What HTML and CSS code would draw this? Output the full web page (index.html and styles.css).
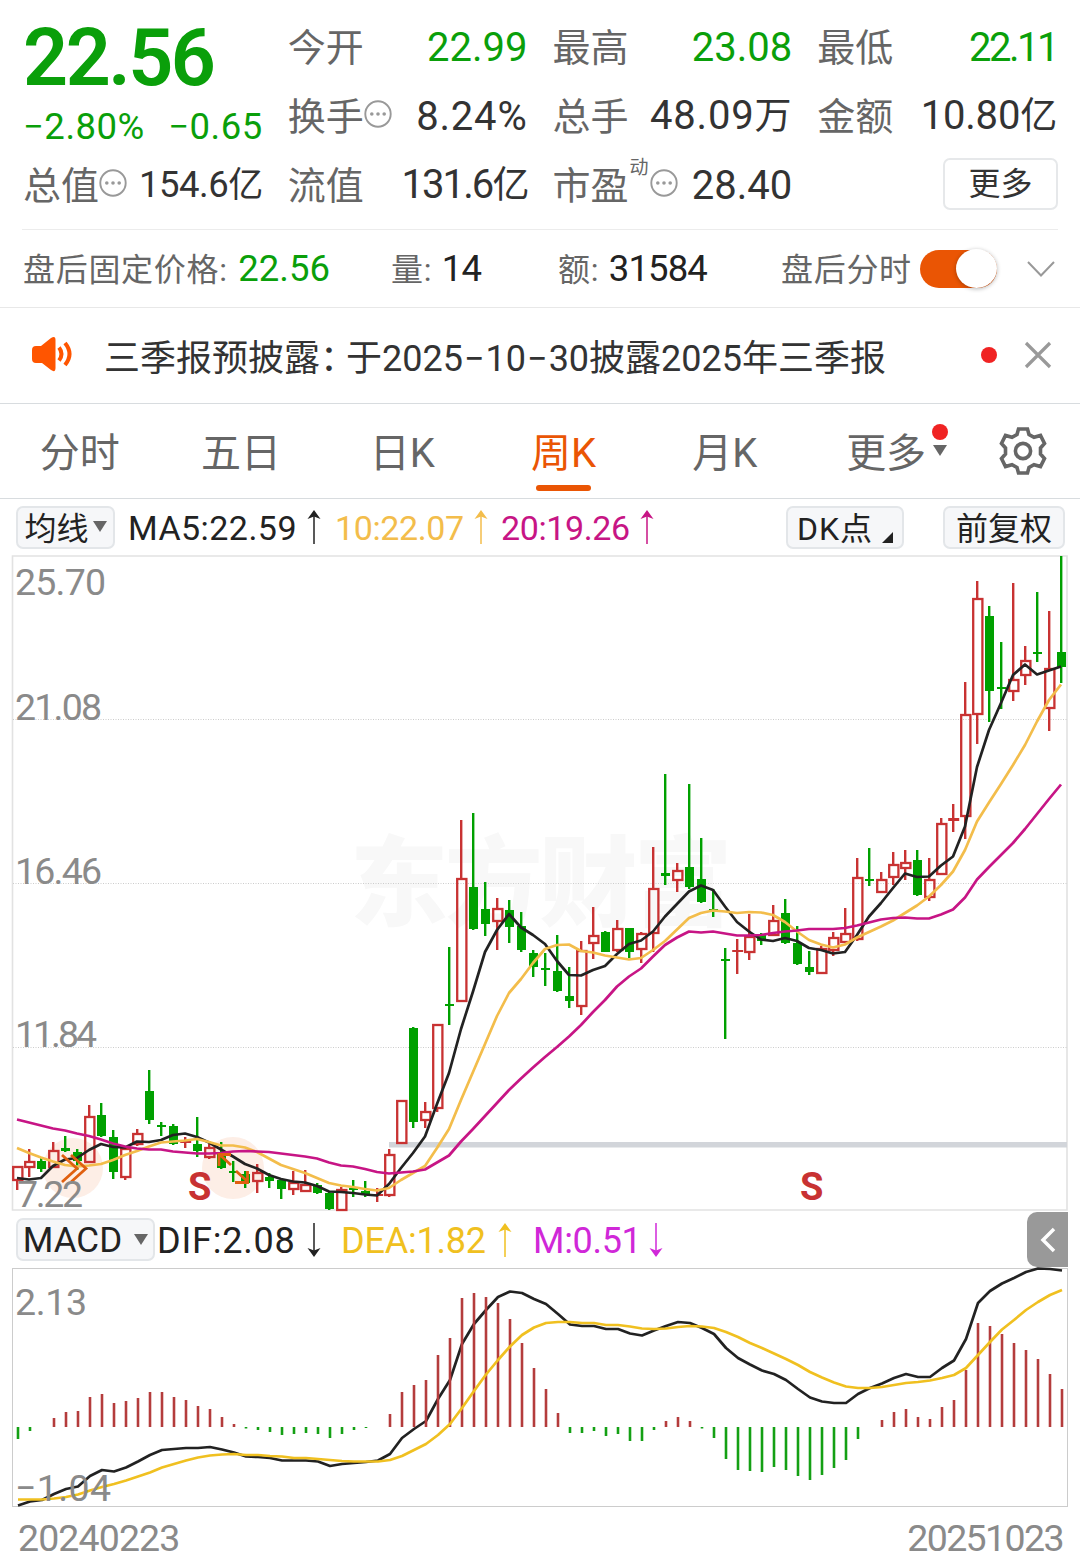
FILE: index.html
```html
<!DOCTYPE html>
<html lang="zh-CN">
<head>
  <meta charset="UTF-8" />
  <meta name="viewport" content="width=device-width, initial-scale=1" />
  <title>周K 行情</title>
  <link rel="stylesheet" href="styles.css">
</head>
<body>

<svg class="defs" width="0" height="0">
  <symbol id="more" viewBox="0 0 28 28">
    <circle cx="14" cy="14" r="12.7" fill="none" stroke="#999" stroke-width="1.9" />
    <circle cx="7.8" cy="14" r="1.8" fill="#999" /><circle cx="14" cy="14" r="1.8" fill="#999" /><circle cx="20.2" cy="14" r="1.8" fill="#999" />
  </symbol>
  <symbol id="up" viewBox="0 0 14 34">
    <path d="M7 34V3" fill="none" stroke="currentColor" stroke-width="1.5" />
    <path d="M7 0L13.5 9L7 6.5L.5 9Z" fill="currentColor" />
  </symbol>
  <symbol id="down" viewBox="0 0 14 34">
    <path d="M7 0V31" fill="none" stroke="currentColor" stroke-width="1.5" />
    <path d="M7 34L13.5 25L7 27.5L.5 25Z" fill="currentColor" />
  </symbol>
</svg>

<header class="quote">
  <div class="price-block">
    <div class="price">22.56</div>
    <div class="change"><span>−2.80%</span><span>−0.65</span></div>
  </div>
  <div class="cell"><span class="label">今开</span><span class="value green">22.99</span></div>
  <div class="cell"><span class="label">最高</span><span class="value green">23.08</span></div>
  <div class="cell"><span class="label">最低</span><span class="value green tighter">22.11</span></div>
  <div class="cell"><span class="label">换手<svg class="info"><use href="#more" /></svg></span><span class="value wide">8.24%</span></div>
  <div class="cell"><span class="label">总手</span><span class="value wide">48.09<i>万</i></span></div>
  <div class="cell"><span class="label">金额</span><span class="value narrow">10.80<i>亿</i></span></div>
  <div class="cell"><span class="label">总值<svg class="info"><use href="#more" /></svg></span><span class="value small">154.6<i>亿</i></span></div>
  <div class="cell"><span class="label">流值</span><span class="value tight">131.6<i>亿</i></span></div>
  <div class="cell"><span class="label">市盈<sup>动</sup><svg class="info"><use href="#more" /></svg></span><span class="value">28.40</span></div>
  <div class="cell end"><button class="more-btn">更多</button></div>
</header>

<section class="after-hours">
  <div class="ah-item price-item">盘后固定价格: <b class="green">22.56</b></div>
  <div class="ah-item vol-item">量: <b>14</b></div>
  <div class="ah-item amt-item">额: <b>31584</b></div>
  <div class="ah-item">盘后分时</div>
  <span class="toggle"></span>
  <svg class="chevron" viewBox="0 0 28 16"><path d="M1 1L14 14.5L27 1" fill="none" stroke="#999" stroke-width="2" /></svg>
</section>

<section class="notice">
  <svg class="horn" viewBox="0 0 42 36">
    <path d="M1 14Q1 10 5 10H10L20 2Q24.500 -1 24.500 4V32Q24.500 37 20 34L11 27H5Q1 27 1 23Z" fill="#ff5500" />
    <path d="M28 11.500Q33 18 28 24.500M34 7Q43 18 34 29" fill="none" stroke="#ff5500" stroke-width="4" />
  </svg>
  <p>三季报预披露<span class="colon">：</span>于2025<span class="dash">−</span>10<span class="dash">−</span>30披露2025年三季报</p>
  <span class="dot"></span>
  <svg class="close" viewBox="0 0 28 28"><path d="M2 2L26 26M26 2L2 26" stroke="#999" stroke-width="3.200" /></svg>
</section>

<nav class="tabs">
  <a class="tab">分时</a>
  <a class="tab">五日</a>
  <a class="tab">日K</a>
  <a class="tab active">周K</a>
  <a class="tab">月K</a>
  <a class="tab"><span class="more-tab">更多<span class="dot"></span><span class="tri"></span></span></a>
  <a class="settings">
    <svg width="50" height="50" viewBox="-25 -25 50 50" fill="none" stroke="#666" stroke-width="3.600">
      <path d="M-4.500 -22H4.500L6 -16.500L11 -13.700L17.500 -15.500L21.500 -7.500L17.500 -3V3L21.500 7.500L17.500 15.500L11 13.700L6 16.500L4.500 22H-4.500L-6 16.500L-11 13.700L-17.500 15.500L-21.500 7.500L-17.500 3V-3L-21.500 -7.500L-17.500 -15.500L-11 -13.700L-6 -16.500Z" />
      <circle r="7.600" />
    </svg>
  </a>
</nav>

<div class="bar ma-bar">
  <button class="pill">均线<span class="tri"></span></button>
  <span class="ind ma5">MA5:22.59</span><svg class="arrow"><use href="#up" /></svg>
  <span class="ind ma10">10:22.07</span><svg class="arrow ma10"><use href="#up" /></svg>
  <span class="ind ma20">20:19.26</span><svg class="arrow ma20"><use href="#up" /></svg>
  <button class="pill dk">DK点<span class="corner"></span></button>
  <button class="pill fq">前复权</button>
</div>

<svg id="kline" class="chart" viewBox="0 555 1080 657"></svg>

<div class="bar macd-bar">
  <button class="pill macd">MACD<span class="tri"></span></button>
  <span class="ind dif">DIF:2.08</span><svg class="arrow"><use href="#down" /></svg>
  <span class="ind dea">DEA:1.82</span><svg class="arrow dea"><use href="#up" /></svg>
  <span class="ind m">M:0.51</span><svg class="arrow m"><use href="#down" /></svg>
  <button class="fold"><svg width="16" height="26" viewBox="0 0 16 26"><path d="M14 2L3 13L14 24" fill="none" stroke="#fff" stroke-width="3.500" /></svg></button>
</div>

<svg id="macd" class="chart" viewBox="0 1267 1080 241"></svg>

<footer class="dates"><span>20240223</span><span class="last">20251023</span></footer>

<script src="chart.js"></script>
</body>
</html>
```

FILE: styles.css
```css
:root {
  --green: #0a9f0a;
  --orange: #ea5504;
  --text: #333;
  --muted: #666;
  --line: #d8dcdf;
}

* {
  box-sizing: border-box;
}
body {
  margin: 0;
  width: 1080px;
  background: #fff;
  color: var(--text);
  font-family: Roboto, "Noto Sans CJK SC", sans-serif;
}
.defs {
  position: absolute;
}
button {
  font: inherit;
  color: inherit;
  padding: 0;
}
i, b {
  font-style: normal;
  font-weight: 400;
}
.green {
  color: var(--green);
}

/* quote header */
.quote {
  display: grid;
  grid-template-columns: repeat(4, 1fr);
  grid-template-rows: 69px 69px 69px;
  column-gap: 25px;
  height: 230px;
  margin: 0 22px;
  padding: 13px 1px 0 1px;
  border-bottom: 1px solid #ececec;
}
.price-block {
  grid-row: span 2;
  color: var(--green);
}
.price {
  font-size: 79px;
  font-weight: 600;
  line-height: 91px;
  letter-spacing: -2.5px;
}
.change {
  display: flex;
  justify-content: space-between;
  font-size: 36.5px;
  line-height: 45px;
  letter-spacing: .5px;
}
.cell {
  display: flex;
  justify-content: space-between;
  align-items: center;
  white-space: nowrap;
  line-height: 56px;
}
.cell.end {
  justify-content: flex-end;
}
.label {
  display: flex;
  align-items: center;
  font-size: 38px;
  color: var(--muted);
}
.label sup {
  font-size: 19px;
  line-height: 20px;
  align-self: flex-start;
  margin: 0 1px;
}
.info {
  width: 28px;
  height: 28px;
  margin-top: -6px;
}
.value {
  font-size: 40px;
}
.value i {
  font-size: 37px;
}
.value.wide {
  letter-spacing: .8px;
}
.value.tight {
  letter-spacing: -1.9px;
}
.value.tighter {
  letter-spacing: -2.5px;
}
.value.narrow {
  letter-spacing: -.2px;
}
.value.small {
  font-size: 36.5px;
  letter-spacing: -.5px;
}
.value.small i {
  font-size: 35px;
}
.more-btn {
  width: 115px;
  height: 52px;
  margin: -4px -1px 0 0;
  border: 2px solid #e6e8ea;
  border-radius: 7px;
  background: #fff;
  font-size: 32px;
  line-height: 48px;
}

/* after-hours row */
.after-hours {
  display: flex;
  align-items: center;
  height: 78px;
  padding-left: 23px;
  border-bottom: 1px solid #e8e8e8;
}
.ah-item {
  margin-top: -3px;
  font-size: 32px;
  letter-spacing: .7px;
  color: var(--muted);
  white-space: nowrap;
}
.ah-item b {
  margin-left: 2px;
  font-size: 36.5px;
  letter-spacing: 0;
  color: #222;
}
.vol-item b,
.amt-item b {
  margin-left: 1px;
  letter-spacing: -.9px;
}
.ah-item b.green {
  color: var(--green);
}
.price-item {
  width: 368px;
}
.vol-item {
  width: 167px;
}
.amt-item {
  width: 223px;
}
.toggle {
  width: 77px;
  height: 38px;
  margin-left: 8px;
  border-radius: 19px;
  background: var(--orange);
  display: flex;
  align-items: center;
  justify-content: flex-end;
}
.toggle::after {
  content: "";
  width: 41px;
  height: 39px;
  border-radius: 50%;
  background: #fff;
  box-shadow: 0 1px 4px rgba(0, 0, 0, .3);
}
.chevron {
  width: 28px;
  height: 16px;
  margin-left: 30px;
}

/* notice */
.notice {
  display: flex;
  align-items: center;
  height: 96px;
  padding: 0 28px 2px 31px;
  border-bottom: 1px solid var(--line);
}
.horn {
  width: 42px;
  height: 36px;
  margin-top: -1px;
}
.notice p {
  flex: 1;
  margin: 0 0 0 31px;
  font-size: 36px;
  white-space: nowrap;
}
.colon {
  letter-spacing: -10px;
}
.dash {
  margin: 0 1px;
}
.dot {
  width: 16px;
  height: 16px;
  border-radius: 50%;
  background: #f02323;
}
.close {
  width: 28px;
  height: 28px;
  margin-left: 27px;
}

/* tabs */
.tabs {
  display: flex;
  height: 95px;
  border-bottom: 1px solid var(--line);
}
.tab {
  position: relative;
  flex: 0 0 161.3px;
  padding-right: 2px;
  text-align: center;
  font-size: 40px;
  line-height: 100px;
  color: var(--muted);
}
.tab.active {
  color: var(--orange);
}
.tab.active::after {
  content: "";
  position: absolute;
  left: 52px;
  bottom: 7px;
  width: 55px;
  height: 6px;
  border-radius: 3px;
  background: var(--orange);
}
.more-tab {
  position: relative;
}
.more-tab .dot {
  position: absolute;
  top: -6px;
  right: -22px;
}
.more-tab .tri {
  position: absolute;
  top: 15px;
  right: -21px;
}
.settings {
  flex: 1;
  display: flex;
  align-items: center;
  justify-content: center;
  padding-right: 2px;
}
.tri {
  border: 7px solid transparent;
  border-top: 11px solid var(--muted);
  border-bottom: 0;
}

/* indicator bars */
.bar {
  display: flex;
  align-items: center;
  height: 56px;
  padding: 0 12px 0 16px;
}
.ind {
  white-space: nowrap;
  padding-top: 2px;
}
.pill {
  display: flex;
  align-items: center;
  justify-content: center;
  flex: none;
  width: 99px;
  height: 43px;
  border: 2px solid #e3e6e9;
  border-radius: 7px;
  background: #f6f7f9;
  color: #222;
  font-size: 32px;
  line-height: 38px;
  padding-top: 3px;
}
.pill .tri {
  margin: -4px 0 0 4px;
}
.arrow {
  width: 14px;
  height: 34px;
  color: #222;
}
.ma-bar {
  font-size: 34px;
}
.ma-bar .ind {
  width: 167px;
  margin: 0 12px 0 13px;
  letter-spacing: .45px;
}
.ma-bar .ind.ma10,
.ma-bar .ind.ma20 {
  width: 128px;
  margin: 0 11px 0 14px;
  letter-spacing: -.4px;
}
.ma-bar .ind.ma20 {
  margin-left: 13px;
}
.ma5, .dif {
  color: #222;
}
.arrow.ma10, .ma10 {
  color: #f3bd4b;
}
.arrow.ma20, .ma20 {
  color: #c71585;
}
.pill.dk {
  width: 118px;
  margin-left: auto;
  letter-spacing: 1px;
}
.corner {
  align-self: flex-end;
  margin: 0 0 4px 9px;
  border-left: 11px solid transparent;
  border-bottom: 11px solid #222;
}
.pill.fq {
  width: 122px;
  margin: 0 3px 0 39px;
}
.macd-bar {
  height: 55px;
  font-size: 36px;
}
.pill.macd {
  width: 139px;
  font-size: 35px;
}
.pill.macd .tri {
  margin-left: 12px;
}
.ind.dif {
  width: 146px;
  margin-left: 2px;
  margin-right: 4px;
  letter-spacing: .8px;
}
.ind.dea {
  width: 150px;
  margin: 0 7px 0 20px;
  letter-spacing: -.2px;
}
.ind.m {
  width: 106px;
  margin: 0 10px 0 21px;
  letter-spacing: -.3px;
}
.dea, .arrow.dea {
  color: #f0c020;
}
.m, .arrow.m {
  color: #d028d8;
}
.fold {
  display: flex;
  align-items: center;
  justify-content: center;
  width: 41px;
  height: 55px;
  margin-left: auto;
  border: 0;
  border-radius: 10px 0 0 10px;
  background: #999;
}

/* charts */
.chart {
  display: block;
  width: 1080px;
  overflow: visible;
}
.chart .line {
  fill: none;
  stroke-width: 2.7;
  stroke-linejoin: round;
}
.chart .axis {
  font-size: 37.500px;
  fill: #8a8a8a;
}
.chart .mark {
  font-size: 38px;
  font-weight: 700;
  fill: #c83232;
}
.chart .watermark {
  font-family: "Noto Sans CJK SC", sans-serif;
  font-size: 98px;
  font-weight: 900;
  fill: #f8f8f8;
}
.dates {
  display: flex;
  justify-content: space-between;
  height: 56px;
  padding: 0 17px 0 18px;
  font-size: 37.500px;
  line-height: 61px;
  letter-spacing: -.9px;
  color: #8a8a8a;
}
.dates .last {
  letter-spacing: -1.6px;
}
```

FILE: chart.js
```js
const RED = '#c83232';
const GREEN = '#00a000';
const STEP = 12;

// [direction, high, body top, body bottom, low]
const candles = [
  ['r',1167,1167,1180,1190],['r',1149,1162,1167,1177],['g',1158,1161,1169,1172],['r',1142,1151,1167,1168],
  ['g',1136,1148,1151,1152],['g',1149,1152,1161,1170],['r',1105,1117,1162,1163],['g',1103,1115,1136,1137],
  ['g',1130,1137,1172,1179],['r',1149,1149,1177,1180],['r',1129,1134,1144,1146],['g',1070,1091,1120,1124],
  ['g',1122,1125,1127,1136],['g',1124,1126,1144,1145],['r',1137,1141,1143,1148],['g',1117,1144,1151,1157],
  ['r',1144,1148,1157,1159],['g',1142,1153,1168,1169],['g',1161,1171,1173,1182],['g',1171,1174,1183,1188],
  ['r',1164,1173,1181,1193],['g',1173,1177,1181,1188],['g',1178,1180,1189,1199],['r',1171,1183,1189,1195],
  ['r',1170,1185,1191,1191],['g',1183,1185,1193,1194],['g',1192,1193,1209,1210],['r',1187,1190,1210,1210],
  ['g',1180,1188,1190,1197],['g',1181,1191,1195,1197],['r',1188,1194,1196,1202],['r',1149,1155,1195,1197],
  ['r',1101,1101,1143,1143],['g',1027,1028,1122,1128],['r',1102,1112,1120,1128],['r',1025,1025,1108,1112],
  ['g',947,1004,1006,1025],['r',820,879,1001,1001],['g',813,887,929,930],['g',882,909,924,936],
  ['r',898,909,921,950],['g',900,910,927,943],['g',912,926,950,952],['g',950,953,967,977],
  ['g',953,968,970,986],['g',935,971,991,992],['g',967,996,1001,1008],['r',941,951,1006,1015],
  ['r',907,936,943,959],['g',931,932,952,952],['r',920,929,950,952],['g',928,928,952,958],
  ['r',932,934,949,963],['r',847,889,933,952],['g',774,873,876,885],['r',863,871,880,892],
  ['g',784,867,887,889],['g',838,879,902,903],['g',889,909,911,917],['g',948,959,961,1039],
  ['r',939,950,952,974],['r',914,937,952,960],['g',933,935,941,945],['r',905,921,935,935],
  ['g',899,913,943,944],['g',926,943,964,965],['g',951,967,972,975],['r',946,949,973,974],
  ['r',932,938,950,956],['r',908,934,942,943],['r',858,878,939,941],['g',848,879,881,886],
  ['r',872,880,892,892],['r',852,865,877,885],['r',850,863,868,880],['g',850,860,895,896],
  ['r',858,880,897,901],['r',818,824,874,874],['r',804,818,821,832],['r',682,715,816,839],
  ['r',581,599,714,744],['g',606,616,691,722],['g',642,687,689,709],['r',583,680,691,701],
  ['r',646,661,675,685],['g',592,652,654,662],['r',611,669,708,731],['g',556,652,667,683]
];

const ma5 = [1178,1179.5,1178,1166,1159.5,1158,1150,1144,1147,1147.5,1141.5,1142,1140,1135,1133.5,1137,1142.5,1149.5,1156.5,1164,1168.5,1175,1179,1181.5,1182.5,1186,1191.5,1192,1193,1194.5,1195.5,1184,1168,1153,1136.5,1104,1073,1029,991.5,952,930,914,927.5,935,944,961,975,975.5,970,966,954,944,940.5,931.5,916.5,904,891.5,885.5,890,906.5,922,931.5,939.5,941,938,941,948,950,953.5,952,935,916.5,903,888,873.5,877,876.5,865.5,856.5,826.5,767,730,703,675,664.5,674.5,670.5,666.5];
const ma10 = [1148,1153,1157.5,1161.5,1165,1166.5,1165.5,1164,1160,1155,1151,1146.5,1142.5,1141.5,1140.5,1139,1142,1145.5,1145.5,1147.5,1152,1158.5,1165,1169,1173,1178,1183,1185.5,1187,1189,1190.5,1188,1180,1173,1166,1148,1129,1100,1072,1044,1016,993,979,963,949,945,944.5,951,952.5,955.5,957.5,959.5,958,950,941,929.5,918,913,910.5,911.5,913,912,912.5,915,922,931.5,940,944.5,947.5,944.5,937.5,932,926.5,920.5,913,905.5,896.5,885,871.5,850,821.5,802.5,784,765,745,721.5,700,684.5];
const ma20 = [1119.5,1122.5,1125.5,1128.5,1130.5,1133.5,1136,1139.5,1143.5,1146.5,1148.5,1149.5,1149.5,1151.5,1152.5,1153.5,1153.5,1153,1151.5,1151,1151.5,1152,1153.5,1155,1156.5,1158.5,1162.5,1165.5,1166.5,1169,1172,1173.5,1172.5,1171.5,1169.5,1162.5,1155.5,1141.5,1129,1116,1103,1090,1078.5,1067.5,1057,1047,1036.5,1025,1012,1000,986.5,976.5,968.5,956.5,945,937.5,931.5,932.5,931.5,933.5,935.5,935.5,935,933,931.5,930.5,929,929,929,928,925.5,922.5,919.5,918,917.5,918.5,918.5,914.5,909.5,897.5,879.5,867,855,843,829,814,799,784.5];

const dif = [1505.5,1501.5,1500,1494,1489,1486.5,1476,1470,1471.5,1467.5,1461.5,1455,1450,1449,1448,1448,1447,1449.5,1452.5,1456.5,1457,1458,1460.5,1460.5,1460.5,1461.5,1466,1464,1463,1462,1460.5,1454,1438,1429,1421,1399,1380,1344,1324,1310,1297,1291.5,1293,1299,1304,1314,1324.5,1326,1326,1329,1329,1333.5,1335.5,1330.5,1326,1322,1323,1328,1334,1348,1358,1364.5,1370.5,1374,1380,1389,1397.5,1401.5,1403,1403,1394,1388,1383.5,1378,1374,1377,1377,1368,1360.5,1339,1303,1291,1283.5,1278,1272,1268.5,1269,1270.5];
const dea = [1499.5,1499.5,1499.5,1498.5,1497,1494.5,1490.5,1487,1484,1480.5,1476.5,1472.5,1467.5,1464,1460.5,1457.5,1455.5,1454.5,1454,1455,1455,1456,1456.5,1458,1458,1459,1460,1461,1461.5,1461.5,1461.5,1460,1456,1450,1444,1435,1424,1408,1391,1374.5,1360,1346.5,1335,1327.5,1323,1322,1322,1323,1323,1325,1325,1326.5,1328.5,1329,1328.5,1327,1326,1326.5,1328,1332,1337,1343,1348,1353.5,1359,1365,1372,1377.5,1382.5,1386.5,1388,1388,1387,1385,1383,1382,1380.5,1378,1375,1368,1355,1342,1329.5,1320,1310,1302,1295,1290];

const ZERO = 1427;
const bars = [1439,1431,1427,1418,1412,1411,1397,1394,1403,1401,1398,1392,1392,1397,1400,1406,1409,1417,1424,1428.5,1430,1432,1435,1434,1433,1434,1438,1434,1430,1428,1427,1414,1392,1385,1380,1355,1338,1298,1293,1297,1303,1319,1343,1368,1389,1413,1433,1433,1431,1436,1434,1441,1441,1430,1421,1417,1421,1428.5,1438,1459,1470,1471,1472,1467,1470,1476,1480,1475,1468,1460,1439,1427,1420,1412,1409,1417,1419,1407,1400,1370,1323,1326,1334,1343,1350,1359,1374,1389];

function polyline(values, x0, color) {
  const pts = values.map((y, i) => `${x0 + i * STEP},${y}`).join(' ');
  return `<polyline class="line" points="${pts}" stroke="${color}"/>`;
}

function candle([dir, high, top, bottom, low], i) {
  const x = 17.2 + i * STEP;
  if (dir === 'g') {
    return `<path d="M${x} ${high}V${low}" stroke="${GREEN}" stroke-width="2.4"/>` +
      `<rect x="${x - 4.2}" y="${top}" width="9" height="${bottom - top}" fill="${GREEN}"/>`;
  }
  const wick = `<path d="M${x} ${high}V${top}M${x} ${bottom}V${low}" stroke="${RED}" stroke-width="2.4"/>`;
  if (bottom - top < 4) {
    return wick + `<rect x="${x - 5}" y="${top}" width="11" height="${bottom - top}" fill="${RED}"/>`;
  }
  return wick + `<rect x="${x - 4}" y="${top}" width="9.2" height="${bottom - top}" fill="none" stroke="${RED}" stroke-width="2.3"/>`;
}

function axis(text, x, y, width) {
  return `<text class="axis" x="${x}" y="${y}" textLength="${width}">${text}</text>`;
}

function drawKline() {
  let out = '<text class="watermark" x="350" y="918" textLength="382">东方财富</text>';
  out += '<path d="M12.5 1210V556H1067V1210Z" fill="none" stroke="#e2e2e2" stroke-width="1.6"/>';
  [719.5, 883.5, 1047.5].forEach(y => {
    out += `<path d="M13 ${y}H1067" stroke="#ccc" stroke-dasharray="1 1.5"/>`;
  });
  out += '<rect x="389" y="1142" width="678" height="5.5" fill="#d2d5da"/>';
  out += '<circle cx="73" cy="1168" r="30" fill="#fdeee6"/><circle cx="233" cy="1168" r="31" fill="#fdeee6"/>';
  out += candles.map(candle).join('');
  out += polyline(ma5, 17, '#222') + polyline(ma10, 17, '#f3bd4b') + polyline(ma20, 17, '#c71585');
  out += '<path d="M62 1155L77 1168.500L62 1182M71 1155L86 1168.500L71 1182" fill="none" stroke="#e06010" stroke-width="2.800"/>';
  out += '<path d="M231 1165L220 1155M219 1166V1154.500H231M236 1171L247 1181M235 1182.500H247.500V1171" fill="none" stroke="#e06010" stroke-width="2.800"/>';
  out += axis('25.70', 15, 595, 91) + axis('21.08', 15, 720, 87) + axis('16.46', 15, 884, 87);
  out += axis('11.84', 15, 1047, 82) + axis('7.22', 17, 1207, 66);
  out += '<text class="mark" x="188" y="1200">S</text><text class="mark" x="800" y="1200">S</text>';
  document.getElementById('kline').innerHTML = out;
}

function drawMacd() {
  let out = '<rect x="12.5" y="1268.5" width="1055" height="238" fill="none" stroke="#ccc"/>';
  out += polyline(dif, 18, '#222');
  bars.forEach((y, i) => {
    if (y === ZERO) return;
    const color = y < ZERO ? '#b43c3c' : '#14a014';
    out += `<path d="M${18 + i * STEP} ${ZERO}V${y}" stroke="${color}" stroke-width="2.6"/>`;
  });
  out += polyline(dea, 18, '#f0c020');
  out += axis('2.13', 15, 1315, 72) + axis('−1.04', 15, 1501, 96);
  document.getElementById('macd').innerHTML = out;
}

drawKline();
drawMacd();
```
